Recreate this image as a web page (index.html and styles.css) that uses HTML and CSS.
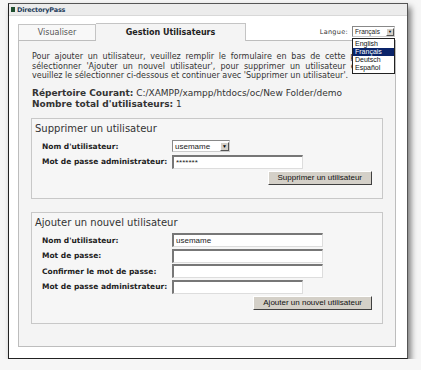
FILE: index.html
```html
<!DOCTYPE html>
<html lang="fr">

<head>
    <meta charset="UTF-8" />
    <meta name="viewport" content="width=device-width, initial-scale=1" />
    <title>DirectoryPass</title>
    <link rel="stylesheet" href="styles.css">
</head>

<body>
    <div class="window">
        <div class="titlebar"><span class="app-icon"></span>DirectoryPass</div>

        <div class="window-body">
            <!-- Tabs + language -->
            <div class="tabbar">
                <span class="tab">Visualiser</span>
                <span class="tab active">Gestion Utilisateurs</span>
                <div class="lang">
                    <span class="lang-label">Langue:</span>
                    <span class="select small">Français<span class="arrow">&#9660;</span></span>
                    <ul class="lang-list">
                        <li>English</li>
                        <li class="selected">Français</li>
                        <li>Deutsch</li>
                        <li>Español</li>
                    </ul>
                </div>
            </div>

            <div class="panel">
                <p class="intro">Pour ajouter un utilisateur, veuillez remplir le formulaire en bas de cette page et
                    sélectionner 'Ajouter un nouvel utilisateur', pour supprimer un utilisateur existant veuillez le
                    sélectionner ci-dessous et continuer avec 'Supprimer un utilisateur'.</p>

                <p class="info">
                    <strong>Répertoire Courant:</strong> C:/XAMPP/xampp/htdocs/oc/New Folder/demo<br>
                    <strong>Nombre total d'utilisateurs:</strong> 1
                </p>

                <!-- Delete user -->
                <div class="box">
                    <div class="box-title">Supprimer un utilisateur</div>
                    <div class="row">
                        <label>Nom d'utilisateur:</label>
                        <span class="select">usemame<span class="arrow">&#9660;</span></span>
                    </div>
                    <div class="row">
                        <label>Mot de passe administrateur:</label>
                        <input class="field short" type="text" value="*******" />
                    </div>
                    <div class="actions">
                        <button type="button">Supprimer un utilisateur</button>
                    </div>
                </div>

                <!-- Add user -->
                <div class="box">
                    <div class="box-title">Ajouter un nouvel utilisateur</div>
                    <div class="row">
                        <label>Nom d'utilisateur:</label>
                        <input class="field" type="text" value="usemame" />
                    </div>
                    <div class="row">
                        <label>Mot de passe:</label>
                        <input class="field" type="text" value="" />
                    </div>
                    <div class="row">
                        <label>Confirmer le mot de passe:</label>
                        <input class="field" type="text" value="" />
                    </div>
                    <div class="row">
                        <label>Mot de passe administrateur:</label>
                        <input class="field short" type="text" value="" />
                    </div>
                    <div class="actions">
                        <button type="button">Ajouter un nouvel utilisateur</button>
                    </div>
                </div>
            </div>
        </div>
    </div>
</body>

</html>
```

FILE: styles.css
```css
body {
    margin: 0;
    padding: 3px 0 0 8px;
    font-family: "DejaVu Sans", Verdana, sans-serif;
    background-color: #f6f6f6;
    color: #333;
}

.window {
    width: 398px;
    background-color: #fff;
    border: 1px solid #555;
    border-left-color: #222;
    border-bottom-color: #222;
    box-shadow: 3px 4px 6px rgba(0, 0, 0, 0.5);
}

.titlebar {
    display: flex;
    align-items: center;
    height: 11px;
    padding-left: 2px;
    background-color: #ececec;
    border-bottom: 1px solid #d8d8d8;
    font-size: 6.5px;
    font-weight: bold;
    letter-spacing: -0.2px;
    color: #1f3d5c;
}

.app-icon {
    width: 4px;
    height: 5px;
    margin-right: 2px;
    background-color: #1f4f2f;
}

.window-body {
    padding: 6px 11px 11px 9px;
}

/* Tabs */
.tabbar {
    display: flex;
    align-items: flex-end;
    height: 18px;
    position: relative;
}

.tab {
    display: flex;
    align-items: center;
    justify-content: center;
    height: 15px;
    width: 76px;
    border: 1px solid #c4c4c4;
    border-bottom: none;
    background-color: #f8f8f8;
    font-size: 8px;
    color: #555;
}

.tab.active {
    height: 17px;
    width: 149px;
    margin-bottom: -1px;
    position: relative;
    border-left: none;
    background-color: #f4f4f4;
    font-size: 8px;
    font-weight: bold;
    color: #222;
}

.lang {
    margin-left: auto;
    margin-right: 1px;
    align-self: flex-start;
    margin-top: 4px;
    display: flex;
    align-items: center;
    position: relative;
}

.lang-label {
    font-size: 6.5px;
    margin-right: 4px;
    letter-spacing: 0.3px;
}

.select {
    display: inline-flex;
    align-items: center;
    justify-content: space-between;
    width: 58px;
    height: 12px;
    box-sizing: border-box;
    padding-left: 2px;
    background-color: #fff;
    border: 1px solid #888;
    border-right-color: #ccc;
    border-bottom-color: #ccc;
    font-family: "Liberation Sans", Arial, sans-serif;
    font-size: 8px;
    color: #222;
}

.select.small {
    width: 43px;
    height: 11px;
    font-size: 6.5px;
}

.arrow {
    display: flex;
    align-items: center;
    justify-content: center;
    width: 9px;
    height: 9px;
    background-color: #d4d0c8;
    border: 1px solid #fff;
    border-right-color: #555;
    border-bottom-color: #555;
    box-sizing: border-box;
    font-size: 5px;
    color: #000;
}

.select.small .arrow {
    width: 8px;
    height: 8px;
    font-size: 4px;
}

.lang-list {
    position: absolute;
    top: 12px;
    right: 0;
    width: 43px;
    box-sizing: border-box;
    margin: 0;
    padding: 1px 0;
    list-style: none;
    background-color: #fff;
    border: 1px solid #222;
    font-family: "Liberation Sans", Arial, sans-serif;
    font-size: 7px;
    line-height: 8px;
    color: #111;
    z-index: 2;
}

.lang-list li {
    padding-left: 2px;
}

.lang-list li.selected {
    background-color: #0a246a;
    color: #fff;
}

/* Panel */
.panel {
    border: 1px solid #bdbdbd;
    background-color: #f4f4f4;
    padding: 11px 12px 22px 12px;
}

.intro {
    margin: 0 0 7px 1px;
    font-size: 8px;
    line-height: 9.5px;
    text-align: justify;
}

.info {
    margin: 0 0 8px 1px;
    font-size: 9px;
    line-height: 11px;
}

.info strong {
    font-weight: 600;
}

.box {
    border: 1px solid #c8c8c8;
    background-color: #f6f6f6;
    padding: 4px 10px 13px 10px;
    margin-bottom: 13px;
}

.box:last-child {
    margin-bottom: 0;
}

.box-title {
    margin-left: -7px;
    margin-bottom: 6px;
    font-size: 10px;
    line-height: 11px;
}

.row {
    display: flex;
    align-items: center;
    height: 13px;
    margin-bottom: 2.5px;
}

.row label {
    width: 130px;
    font-size: 7.5px;
    font-weight: bold;
    color: #222;
}

.field {
    width: 151px;
    height: 14px;
    box-sizing: border-box;
    margin: 0;
    padding: 0 2px;
    background-color: #fff;
    border: 1px solid #999;
    border-top: 2px solid #777;
    border-left: 2px solid #777;
    border-right-color: #ddd;
    border-bottom-color: #ddd;
    font-family: "Liberation Sans", Arial, sans-serif;
    font-size: 8px;
    color: #222;
}

.field.short {
    width: 131px;
}

.actions {
    display: flex;
    justify-content: flex-end;
    margin-top: 2px;
}

button {
    height: 14px;
    padding: 0 9px;
    background-color: #d4d0c8;
    border: 1px solid #fff;
    border-right-color: #404040;
    border-bottom-color: #404040;
    font-family: "Liberation Sans", Arial, sans-serif;
    font-size: 8px;
    color: #111;
}
```
